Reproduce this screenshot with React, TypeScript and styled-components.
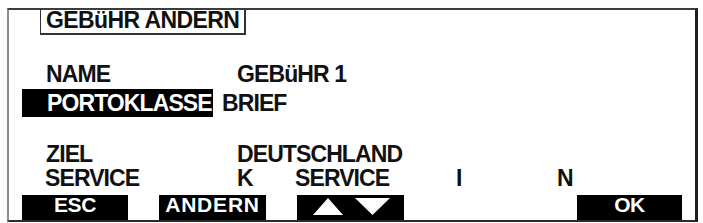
import React from 'react';
import styled, { createGlobalStyle } from 'styled-components';

const GlobalStyle = createGlobalStyle`
  html, body {
    margin: 0;
    padding: 0;
    background: #fdfdfd;
  }
  body {
    font-family: 'Liberation Sans', Arial, sans-serif;
    font-weight: bold;
    color: #111;
  }
`;

const Frame = styled.div`
  box-sizing: content-box;
  margin: 8px 0 0 7px;
  width: 686px;
  height: 210px;
  background: #fff;
  border-top: 2px solid #3c3c3c;
  border-left: 2px solid #8c8c8c;
  border-right: 3px solid #1e1e1e;
  border-bottom: 2px solid #2c2c2c;
  display: flex;
  flex-direction: column;
`;

const TitleBox = styled.div`
  align-self: flex-start;
  margin-left: 31px;
  padding: 0 5px;
  height: 23px;
  line-height: 21px;
  font-size: 23px;
  letter-spacing: -0.6px;
  border-left: 1px solid #333;
  border-right: 2px solid #333;
  border-bottom: 2px solid #333;
`;

const Rows = styled.div`
  padding-left: 13px;
  display: flex;
  flex-direction: column;
`;

const Row = styled.div<{ $top?: number; $h?: number }>`
  display: flex;
  margin-top: ${(p) => p.$top ?? 0}px;
  height: ${(p) => p.$h ?? 24}px;
  line-height: ${(p) => p.$h ?? 24}px;
  font-size: 23px;
  letter-spacing: -0.9px;
  white-space: nowrap;
`;

const Label = styled.div<{ $active?: boolean; $pad?: number }>`
  width: 191px;
  flex-shrink: 0;
  box-sizing: border-box;
  padding-left: ${(p) => p.$pad ?? 24}px;
  background: ${(p) => (p.$active ? '#000' : 'transparent')};
  color: ${(p) => (p.$active ? '#fff' : '#111')};
`;

const Value = styled.div<{ $pad?: number; $w?: number }>`
  box-sizing: border-box;
  flex-shrink: 0;
  padding-left: ${(p) => p.$pad ?? 24}px;
  width: ${(p) => (p.$w ? `${p.$w}px` : 'auto')};
`;

const Cell = styled.div<{ $w?: number }>`
  flex-shrink: 0;
  width: ${(p) => (p.$w ? `${p.$w}px` : 'auto')};
`;

const Keys = styled.div`
  margin-top: 5px;
  padding-left: 13px;
  display: grid;
  grid-template-columns: 106px 107px 107px 111px 105px;
  column-gap: 31px;
  height: 25px;
`;

const Key = styled.div<{ $spacing?: number }>`
  background: #000;
  color: #fff;
  font-size: 21px;
  line-height: 20px;
  height: 25px;
  text-align: center;
  letter-spacing: ${(p) => p.$spacing ?? -0.4}px;
`;

const Empty = styled.div``;

const ArrowKey = styled(Key)`
  display: flex;
  svg {
    display: block;
  }
`;

export default function App() {
  return (
    <>
      <GlobalStyle />
      <Frame>
        <TitleBox>GEBüHR ANDERN</TitleBox>
        <Rows>
          <Row $top={27}>
            <Label>NAME</Label>
            <Value>GEBüHR 1</Value>
          </Row>
          <Row $top={3} $h={28}>
            <Label $active $pad={25}>PORTOKLASSE</Label>
            <Value $pad={9}>BRIEF</Value>
          </Row>
          <Row $top={25}>
            <Label>ZIEL</Label>
            <Value>DEUTSCHLAND</Value>
          </Row>
          <Row>
            <Label $pad={23}>SERVICE</Label>
            <Value $w={82}>K</Value>
            <Cell $w={161}>SERVICE</Cell>
            <Cell $w={101}>I</Cell>
            <Cell>N</Cell>
          </Row>
        </Rows>
        <Keys>
          <Key>ESC</Key>
          <Key $spacing={0.8}>ANDERN</Key>
          <ArrowKey>
            <svg width="107" height="25" viewBox="0 0 107 25">
              <polygon points="16,20 31,3 46,20" fill="#fff" />
              <polygon points="58,3 93,3 75.5,20" fill="#fff" />
            </svg>
          </ArrowKey>
          <Empty />
          <Key>OK</Key>
        </Keys>
      </Frame>
    </>
  );
}
